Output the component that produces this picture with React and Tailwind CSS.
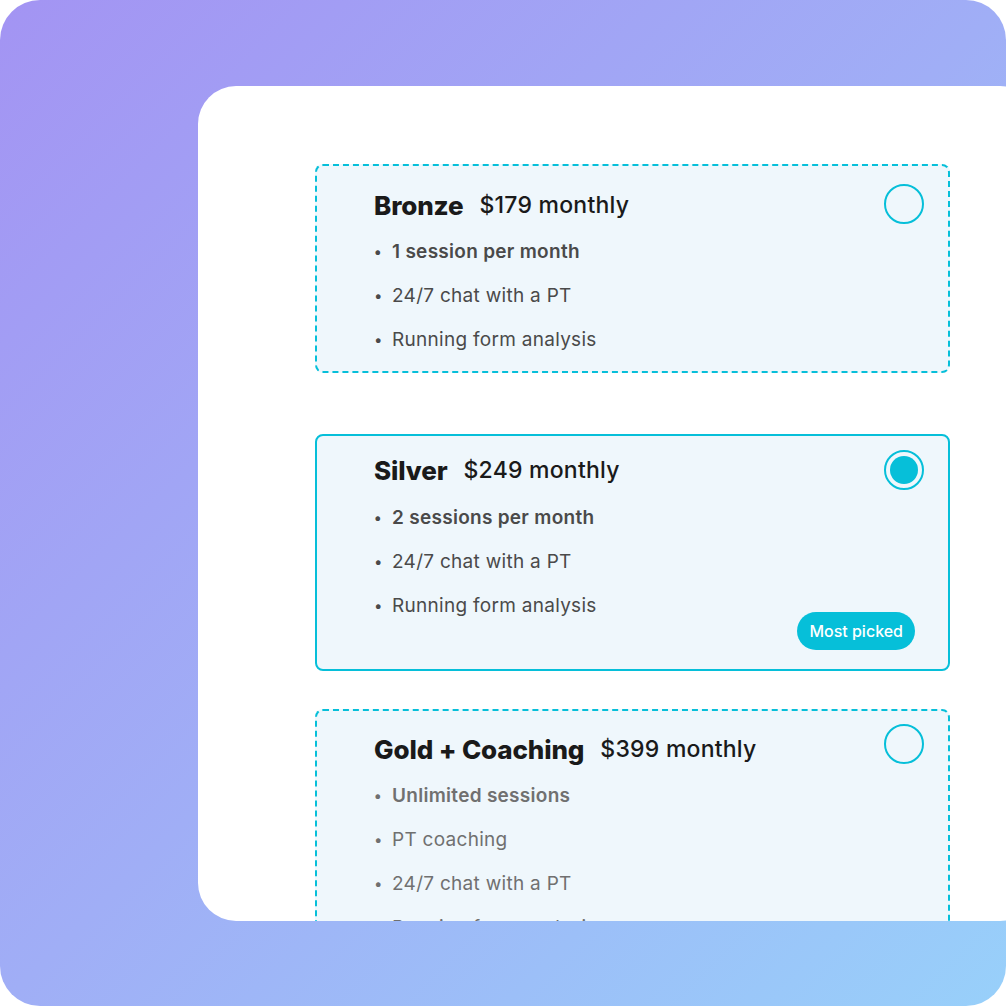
import React from 'react';

const plans = [
  {
    name: 'Bronze',
    price: '$179 monthly',
    features: ['1 session per month', '24/7 chat with a PT', 'Running form analysis'],
    selected: false,
    faded: false,
    box: 'mt-[78px] pt-[23px] pb-[9px]',
    radio: 'top-[18px]',
    list: 'mt-[9px]',
  },
  {
    name: 'Silver',
    price: '$249 monthly',
    features: ['2 sessions per month', '24/7 chat with a PT', 'Running form analysis'],
    selected: true,
    faded: false,
    badge: 'Most picked',
    box: 'mt-[61px] pt-[18px] pb-[41px]',
    radio: 'top-[14px]',
    list: 'mt-[10px]',
  },
  {
    name: 'Gold + Coaching',
    price: '$399 monthly',
    features: ['Unlimited sessions', 'PT coaching', '24/7 chat with a PT', 'Running form analysis'],
    selected: false,
    faded: true,
    box: 'mt-[38px] pt-[22px] pb-[10px]',
    radio: 'top-[13px]',
    list: 'mt-[9px]',
  },
];

const Radio = ({ selected, className }) => (
  <span
    className={`absolute right-[24px] ${className} flex h-[40px] w-[40px] items-center justify-center rounded-full border-2 border-[#06bfd9]`}
  >
    {selected && <span className="h-[28px] w-[28px] rounded-full bg-[#06bfd9]" />}
  </span>
);

const PlanCard = ({ plan }) => (
  <div
    className={`relative w-[635px] rounded-[8px] border-2 bg-[#eff7fc] pl-[57px] ${plan.box} ${
      plan.selected ? 'border-solid border-[#06bfd9]' : 'border-dashed border-[#06bfd9]'
    }`}
  >
    <div className="flex h-[32px] items-center gap-x-[16px]">
      <span className="text-[26px] font-extrabold tracking-[-0.005em] text-[#1a1a1a]">{plan.name}</span>
      <span className="text-[23px] font-medium tracking-[0.01em] text-[#1a1a1a]">{plan.price}</span>
    </div>

    <ul className={plan.list}>
      {plan.features.map((f, i) => (
        <li
          key={f}
          className={`flex h-[44px] items-center text-[19px] tracking-[0.015em] ${
            plan.faded ? 'text-[#707070]' : 'text-[#4a4a4a]'
          } ${i === 0 ? 'font-semibold' : 'font-normal'}`}
        >
          <span className="w-[18px] text-[15px]">•</span>
          {f}
        </li>
      ))}
    </ul>

    <Radio selected={plan.selected} className={plan.radio} />

    {plan.badge && (
      <span className="absolute bottom-[19px] right-[33px] flex h-[38px] items-center rounded-full bg-[#06bfd9] px-[12px] text-[16px] font-medium text-white">
        {plan.badge}
      </span>
    )}
  </div>
);

export default function App() {
  return (
    <div className="h-[1006px] w-[1006px] bg-white" style={{ fontFamily: 'Inter, "Noto Sans", sans-serif' }}>
      <div className="h-full w-full overflow-hidden rounded-[40px] bg-[linear-gradient(135deg,#a394f3_0%,#a0aef6_50%,#98d0fa_100%)] pl-[198px] pt-[86px]">
        <div className="flex h-[835px] w-[840px] flex-col overflow-hidden rounded-[38px] bg-white pl-[117px]">
          {plans.map((p) => (
            <div key={p.name} className="shrink-0">
              <PlanCard plan={p} />
            </div>
          ))}
        </div>
      </div>
    </div>
  );
}
